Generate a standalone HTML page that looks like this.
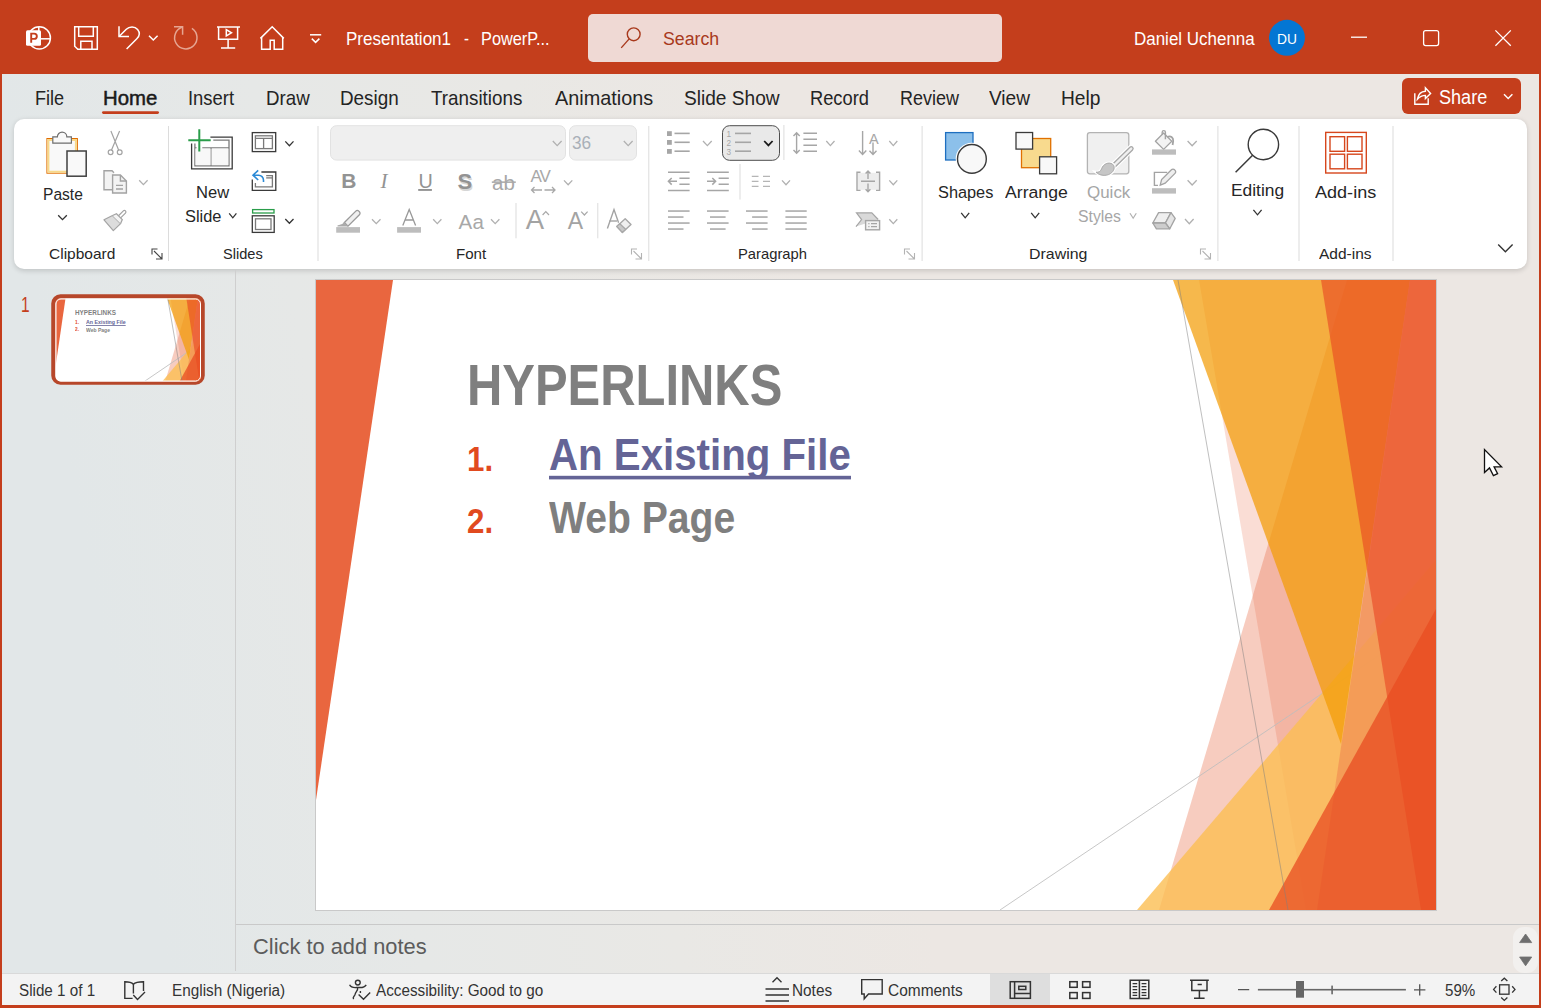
<!DOCTYPE html>
<html><head><meta charset="utf-8"><title>PowerPoint</title>
<style>
html,body{margin:0;padding:0}
body{width:1541px;height:1008px;overflow:hidden;position:relative;font-family:"Liberation Sans",sans-serif;background:#e6e7e7}
.a{position:absolute}
.t{position:absolute;white-space:pre;transform-origin:0 0}
</style></head><body>
<div class="a" style="left:0;top:0;width:1541px;height:1008px;background:#c43e1c"></div>
<div class="a" style="left:2px;top:74px;width:1537px;height:931px;background:linear-gradient(79deg,#e2e7e8 0%,#e2e7e8 10%,#e6e8e7 25%,#e9e8e5 40%,#ece7e3 55%,#ece7e3 100%)"></div>
<div class="a" style="left:588px;top:14px;width:414px;height:48px;border-radius:5px;background:#efd9d4"></div>
<div class="a" style="left:1402px;top:78px;width:119px;height:36px;border-radius:6px;background:#c43e1c"></div>
<div class="a" style="left:14px;top:119px;width:1513px;height:150px;border-radius:10px;background:#fff;box-shadow:0 1.5px 5px rgba(0,0,0,.15)"></div>
<div class="a" style="left:235px;top:270px;width:1px;height:701px;background:#cfcfcf"></div>
<div class="a" style="left:236px;top:924px;width:1303px;height:1px;background:#c9c9c9"></div>
<div class="a" style="left:2px;top:973px;width:1537px;height:32px;background:#f3f3f3;border-top:1px solid #d9d9d9;box-sizing:border-box"></div>
<svg class="a" style="left:0;top:0" width="1541" height="1008" viewBox="0 0 1541 1008"><rect x="315.5" y="279.5" width="1121" height="631" fill="#fff" stroke="#c9c9c9" stroke-width="1"/><defs><clipPath id="sc"><rect x="316" y="280" width="1120" height="630"/></clipPath></defs><g clip-path="url(#sc)"><polygon points="316,280 393,280 316,800" fill="#e9663f"/><polygon points="1199,280 1436,280 1436,910 1306,910" fill="#e8643e" fill-opacity="0.22"/><polygon points="1347,280 1436,280 1436,910 1159,910" fill="#e8643e" fill-opacity="0.33"/><line x1="1000" y1="910" x2="1436" y2="617" stroke="#bdbdbd" stroke-width="1" stroke-opacity="0.85"/><polygon points="1137,910 1436,560 1436,910" fill="#fbbe52" fill-opacity="0.8"/><polygon points="1173,280 1410,280 1341,744" fill="#f29b03" fill-opacity="0.71"/><polygon points="1410,280 1436,280 1436,910 1317,910" fill="#f29454" fill-opacity="0.8"/><polygon points="1321,280 1436,280 1436,910 1421,910" fill="#e84724" fill-opacity="0.62"/><polygon points="1436,609 1436,910 1269,910" fill="#e84c22" fill-opacity="0.75"/><line x1="1178" y1="280" x2="1288" y2="910" stroke="#808080" stroke-width="1" stroke-opacity="0.5"/></g><rect x="53.5" y="296.5" width="149" height="86" rx="7" fill="none" stroke="#b7472a" stroke-width="4.5"/><defs><clipPath id="tc"><rect x="55.5" y="298.5" width="145.5" height="83" rx="5"/></clipPath></defs><g clip-path="url(#tc)"><rect x="55" y="298" width="147" height="84" fill="#fff"/><g transform="translate(55.5,298.3) scale(0.1302,0.1318) translate(-316,-280)"><polygon points="316,280 393,280 316,800" fill="#e9663f"/><polygon points="1199,280 1436,280 1436,910 1306,910" fill="#e8643e" fill-opacity="0.22"/><polygon points="1347,280 1436,280 1436,910 1159,910" fill="#e8643e" fill-opacity="0.33"/><line x1="1000" y1="910" x2="1436" y2="617" stroke="#bdbdbd" stroke-width="1" stroke-opacity="0.85" vector-effect="non-scaling-stroke"/><polygon points="1137,910 1436,560 1436,910" fill="#fbbe52" fill-opacity="0.8"/><polygon points="1173,280 1410,280 1341,744" fill="#f29b03" fill-opacity="0.71"/><polygon points="1410,280 1436,280 1436,910 1317,910" fill="#f29454" fill-opacity="0.8"/><polygon points="1321,280 1436,280 1436,910 1421,910" fill="#e84724" fill-opacity="0.62"/><polygon points="1436,609 1436,910 1269,910" fill="#e84c22" fill-opacity="0.75"/><line x1="1178" y1="280" x2="1288" y2="910" stroke="#808080" stroke-width="1" stroke-opacity="0.5" vector-effect="non-scaling-stroke"/></g></g><rect x="86" y="325" width="39.7" height="0.8" fill="#646496"/><rect x="56" y="299" width="144.5" height="82" rx="5" fill="none" stroke="#fff" stroke-width="1"/><g fill="none" stroke="#ffffff" stroke-width="1.5"><circle cx="39.3" cy="37.9" r="11.1"/><line x1="38.8" y1="27" x2="38.8" y2="38.8"/><line x1="38.8" y1="38.8" x2="50" y2="38.8"/></g><rect x="26" y="30.3" width="15" height="15.4" rx="1.5" fill="#ffffff"/><path d="M31.2 42.8 V33.6 h3 a2.6 2.6 0 0 1 0 5.3 h-3" stroke="#c43e1c" stroke-width="1.9" fill="none"/><g fill="none" stroke="#ffffff" stroke-width="1.5" stroke-linejoin="miter"><path d="M74.7 26.7 H97.3 V49.3 H77.8 L74.7 46.2 Z"/><path d="M78.7 26.7 V36.3 H93.3 V26.7"/><path d="M80.8 49.3 V41.2 H92 V49.3"/><path d="M119 26.2 V36.5 H129"/><path d="M119.3 36.2 L126.3 29.2 C129.3 26.2 134.8 26 137.6 29.4 C140.2 32.6 139.6 36 136.8 38.8 L126.6 49"/><path d="M149 35.8 L153.3 40 L157.6 35.8"/></g><g fill="none" stroke="#e6a592" stroke-width="1.5"><path d="M191.9 28.3 A11.2 11.2 0 1 1 182.5 27"/><path d="M174 26.8 H182.6 V34.8"/></g><g fill="none" stroke="#ffffff" stroke-width="1.5"><path d="M217 27 H240"/><path d="M218.6 27 V39.2 H237.6 V27"/><path d="M226.3 29.6 L231.5 32.8 L226.3 36 Z"/><path d="M228.1 39.2 V48 M221 48 H235.2"/><path d="M260.4 38.4 L272.2 26.8 L283.8 38.4"/><path d="M261.6 37.3 V49.3 H270.2 V40.3 H274.2 V49.3 H282.7 V37.3"/><path d="M310 34.8 H321.2"/><path d="M311.8 38.6 L315.6 42.4 L319.4 38.6"/></g><g fill="none" stroke="#a8391c" stroke-width="1.4"><circle cx="633.7" cy="34.3" r="6.4"/><path d="M629.2 38.9 L621.2 47.9"/></g><circle cx="1287" cy="37.8" r="18" fill="#0476d3"/><g fill="none" stroke="#ffffff" stroke-width="1.3"><path d="M1351 37.2 H1367"/><rect x="1423.6" y="30.6" width="15" height="15" rx="2"/><path d="M1495.4 30.4 L1510.8 45.8 M1510.8 30.4 L1495.4 45.8"/></g><g fill="none" stroke="#ffffff" stroke-width="1.4" stroke-linejoin="miter"><path d="M1414.8 93.2 V104.3 H1428.2 V98.2"/><path d="M1417.4 99.2 C1418.2 94.5 1421.3 91.4 1425.4 91.2 V87.8 L1430.6 93.4 L1425.4 98.6 V95.4 C1422 95.4 1419.6 96.8 1417.4 99.2 Z"/><path d="M1504 94.2 L1508.2 98.6 L1512.4 94.2"/></g><rect x="102" y="111.2" width="57" height="2.8" rx="1.4" fill="#c43e1c"/><path d="M1498.2 244.6 L1505.4 251.8 L1512.6 244.6" fill="none" stroke="#333" stroke-width="1.4"/><rect x="168" y="126" width="1" height="135" fill="#dcdcdc"/><rect x="317.5" y="126" width="1" height="135" fill="#dcdcdc"/><rect x="648.3" y="126" width="1" height="135" fill="#dcdcdc"/><rect x="921.6" y="126" width="1" height="135" fill="#dcdcdc"/><rect x="1217.4" y="126" width="1" height="135" fill="#dcdcdc"/><rect x="1298.5" y="126" width="1" height="135" fill="#dcdcdc"/><rect x="1392.5" y="126" width="1" height="135" fill="#dcdcdc"/><rect x="46.9" y="138.5" width="30.5" height="34.7" fill="#f9f9f9" stroke="#e06c00" stroke-width="1"/><rect x="48.4" y="140" width="27.5" height="31.7" fill="none" stroke="#f8d98a" stroke-width="2"/><path d="M52.8 143.2 V136.8 H57.4 A4.7 4.7 0 0 1 66.8 136.8 H71.4 V143.2 Z" fill="#f9f9f9" stroke="#6e6e6e" stroke-width="1.2"/><rect x="67" y="151" width="19.2" height="25.2" fill="#f9f9f9" stroke="#404040" stroke-width="1.5"/><path d="M58.2 215.2 L62.5 219.6 L66.8 215.2" fill="none" stroke="#333333" stroke-width="1.3"/><g fill="none" stroke="#a3a3a3" stroke-width="1.2"><path d="M110.9 131 L118.7 150.2 M119.6 131 L111.4 150.2"/><circle cx="110.6" cy="152.3" r="2.4"/><circle cx="119.7" cy="152.3" r="2.4"/></g><g fill="#f3f3f3" stroke="#a3a3a3" stroke-width="1.4"><path d="M112.5 189.8 H104 V170.7 H112 L114 172.7"/><path d="M112.6 175 H120.4 L126.4 181 V193 H112.6 Z"/><path d="M120.4 175 V181 H126.4" fill="none"/><path d="M116 185.4 H123 M116 189 H123" fill="none"/></g><path d="M139.2 180.3 L143.39999999999998 184.6 L147.6 180.3" fill="none" stroke="#b0b0b0" stroke-width="1.3"/><path d="M118.8 217.6 L124.4 212" stroke="#a3a3a3" stroke-width="4.2" stroke-linecap="round"/><path d="M118.8 217.6 L124.4 212" stroke="#fff" stroke-width="1.8" stroke-linecap="round"/><path d="M104 219.8 L112.5 215.5 L120.6 223.6 L113.3 230.6 Z" fill="#dcdcdc" stroke="#a3a3a3" stroke-width="1.2" stroke-linejoin="round"/><path d="M112.5 215.5 L116.5 213.8 L122.3 219.6 L120.6 223.6" fill="#f3f3f3" stroke="#a3a3a3" stroke-width="1.2"/><g fill="none" stroke="#444" stroke-width="1.1"><path d="M152.0 254.5 V249.0 H157.5"/><path d="M154.0 251.0 L162.0 259.0 M162.0 253.0 V259.0 H156.0"/></g><g fill="none" stroke-width="1.3"><path d="M210.4 137.2 H232.2 V168.9 H191.6 V143.6" stroke="#3a3a3a"/><path d="M213.3 140.2 H229 V165.8 H194.9 V143.6" stroke="#7a7a7a"/><path d="M202.3 147.8 H229 M194.9 147.8 H196.6 M211 147.8 V165.8" stroke="#7a7a7a"/></g><rect x="195.5" y="148.5" width="15" height="16.6" fill="#f8f8f8"/><rect x="211.7" y="148.5" width="16.6" height="16.6" fill="#f8f8f8"/><path d="M188.3 140.3 H210.7 M199.3 129.3 V151.5" stroke="#2a9d4a" stroke-width="2"/><path d="M229.2 213.4 L232.8 217.8 L236.4 213.4" fill="none" stroke="#333333" stroke-width="1.3"/><g fill="none" stroke-width="1.3"><rect x="252.3" y="132.6" width="23.4" height="19" stroke="#3a3a3a"/><rect x="255.4" y="135.8" width="17" height="12.8" stroke="#7a7a7a"/><path d="M255.4 138.3 H272.4 M263.6 138.3 V148.6" stroke="#7a7a7a"/></g><path d="M285.3 141.4 L289.4 145.7 L293.5 141.4" fill="none" stroke="#333333" stroke-width="1.3"/><g fill="none" stroke-width="1.3"><path d="M261.4 172 H275.8 V190.3 H252.3 V179.4" stroke="#3a3a3a"/><path d="M266.2 175.6 H272.4 V186.9 H255.4 V183" stroke="#7a7a7a"/><path d="M266.2 177.9 H272.4" stroke="#7a7a7a"/><path d="M258.2 170.3 L253 175.2 L258.2 180 M253.2 175.2 H258.5 A5 5 0 0 1 263.5 180.2 V182" stroke="#2b8ad6" stroke-width="1.6"/></g><g fill="none" stroke-width="1.3"><rect x="252.6" y="209.6" width="21.4" height="3.4" stroke="#2a9d4a"/><rect x="252.3" y="215.8" width="21.9" height="16.6" stroke="#3a3a3a"/><rect x="255.5" y="218.8" width="15.5" height="10.7" stroke="#7a7a7a"/></g><path d="M285.3 219 L289.4 223.3 L293.5 219" fill="none" stroke="#333333" stroke-width="1.3"/><rect x="330.5" y="125.7" width="235" height="34.4" rx="6" fill="#efefef" stroke="#e2e2e2" stroke-width="1"/><rect x="569.5" y="125.7" width="67" height="34.4" rx="6" fill="#efefef" stroke="#e2e2e2" stroke-width="1"/><path d="M552.8 141 L557.2 145.6 L561.6 141" fill="none" stroke="#b0b0b0" stroke-width="1.3"/><path d="M623.8 141 L628.2 145.6 L632.6 141" fill="none" stroke="#b0b0b0" stroke-width="1.3"/><text x="341.2" y="187.8" font-family="Liberation Sans" font-size="21" font-weight="bold" font-style="normal" fill="#939393" >B</text><text x="380.5" y="187.8" font-family="Liberation Serif" font-size="21" font-weight="normal" font-style="italic" fill="#939393" >I</text><text x="418.4" y="187.6" font-family="Liberation Sans" font-size="19.8" font-weight="normal" font-style="normal" fill="#939393" >U</text><rect x="418.2" y="189" width="13.7" height="1.9" fill="#939393"/><text x="458.6" y="190.6" font-family="Liberation Sans" font-size="22" font-weight="bold" font-style="normal" fill="#d6d6d6" >S</text><text x="457.4" y="189.2" font-family="Liberation Sans" font-size="22" font-weight="bold" font-style="normal" fill="#939393" >S</text><text x="492" y="189.6" font-family="Liberation Sans" font-size="20.5" font-weight="normal" font-style="normal" fill="#a8a8a8" >ab</text><rect x="491.8" y="181.4" width="24" height="1.5" fill="#a8a8a8"/><text x="530.5" y="182.2" font-family="Liberation Sans" font-size="17" font-weight="normal" font-style="normal" fill="#a8a8a8" letter-spacing="-1">AV</text><g fill="none" stroke="#a8a8a8" stroke-width="1.3"><path d="M531.5 190 H542 M534.5 187 L531.5 190 L534.5 193 M544.5 190 H555 M552 187 L555 190 L552 193"/></g><path d="M564 180.4 L568.15 184.8 L572.3 180.4" fill="none" stroke="#b0b0b0" stroke-width="1.3"/><path d="M344.4 222.5 L355.8 211.1 A2.1 2.1 0 0 1 358.8 211.1 L359.4 211.7 A2.1 2.1 0 0 1 359.4 214.7 L348 226.1 Z" fill="#efefef" stroke="#999" stroke-width="1.3"/><path d="M344.4 222.6 L342.4 224.6 L337.6 226 L345.8 226 L348 226" fill="#ababab" stroke="#ababab" stroke-width="1.2"/><rect x="336.2" y="227.1" width="23.8" height="5.6" fill="#bdbdbd"/><path d="M372 219.3 L376.25 223.6 L380.5 219.3" fill="none" stroke="#b0b0b0" stroke-width="1.3"/><path d="M402.8 225.5 L409.2 209.6 L415.6 225.5 M405 220 H413.4" fill="none" stroke="#999" stroke-width="1.3"/><rect x="397.1" y="227.1" width="23.9" height="5.6" fill="#bdbdbd"/><path d="M433.2 219.3 L437.29999999999995 223.6 L441.4 219.3" fill="none" stroke="#b0b0b0" stroke-width="1.3"/><text x="458.4" y="228.6" font-family="Liberation Sans" font-size="20.5" font-weight="normal" font-style="normal" fill="#a8a8a8" >A</text><text x="472.6" y="228.6" font-family="Liberation Sans" font-size="20.5" font-weight="normal" font-style="normal" fill="#a8a8a8" >a</text><path d="M491 219.3 L495.2 223.6 L499.4 219.3" fill="none" stroke="#b0b0b0" stroke-width="1.3"/><rect x="515.5" y="203" width="1" height="35.30000000000001" fill="#dcdcdc"/><text x="525.8" y="228.6" font-family="Liberation Sans" font-size="27.5" font-weight="normal" font-style="normal" fill="#a3a3a3" >A</text><path d="M542.6 215 L545.8 211.6 L549 215" fill="none" stroke="#a8a8a8" stroke-width="1.2"/><text x="567.8" y="228.6" font-family="Liberation Sans" font-size="23" font-weight="normal" font-style="normal" fill="#a3a3a3" >A</text><path d="M581.2 211.6 L584.4 215 L587.6 211.6" fill="none" stroke="#a8a8a8" stroke-width="1.2"/><rect x="597.3" y="203" width="1" height="35.30000000000001" fill="#dcdcdc"/><path d="M607.4 228.6 L614 209.6 L620.6 228.6" fill="none" stroke="#a3a3a3" stroke-width="1.4"/><path d="M609.4 221 H617" fill="none" stroke="#a3a3a3" stroke-width="1.4"/><path d="M616.8 226.4 L625.2 218.8 L631 224.4 L622.4 232.4 Z" fill="#f0f0f0" stroke="#fff" stroke-width="3"/><path d="M616.8 226.4 L625.2 218.8 L631 224.4 L622.4 232.4 Z" fill="#f0f0f0" stroke="#a8a8a8" stroke-width="1.4" stroke-linejoin="round"/><path d="M616.8 226.4 L619.8 223.7 L625.6 229.3 L622.4 232.4 Z" fill="#c8c8c8" stroke="#a8a8a8" stroke-width="1.2" stroke-linejoin="round"/><g fill="none" stroke="#b3b3b3" stroke-width="1.1"><path d="M631.5 254.5 V249.0 H637"/><path d="M633.5 251.0 L641.5 259.0 M641.5 253.0 V259.0 H635.5"/></g><g fill="#a6a6a6"><rect x="667" y="131.2" width="4.8" height="4.8"/><rect x="667" y="140" width="4.8" height="4.8"/><rect x="667" y="149" width="4.8" height="4.8"/><rect x="674.5" y="132.6" width="15.2" height="1.6"/><rect x="674.5" y="141.5" width="15.2" height="1.6"/><rect x="674.5" y="150.4" width="15.2" height="1.6"/></g><path d="M703 141 L707.35 145.6 L711.7 141" fill="none" stroke="#b0b0b0" stroke-width="1.3"/><rect x="722.5" y="125.7" width="57" height="34.6" rx="7" fill="#e9e9e9" stroke="#4d4d4d" stroke-width="1"/><text x="726.6" y="137" font-family="Liberation Sans" font-size="8.2" font-weight="normal" font-style="normal" fill="#a6a6a6" >1</text><text x="726.6" y="146" font-family="Liberation Sans" font-size="8.2" font-weight="normal" font-style="normal" fill="#a6a6a6" >2</text><text x="726.6" y="155" font-family="Liberation Sans" font-size="8.2" font-weight="normal" font-style="normal" fill="#a6a6a6" >3</text><g fill="#a6a6a6"><rect x="735" y="132.6" width="16" height="1.6"/><rect x="735" y="141.5" width="16" height="1.6"/><rect x="735" y="150.4" width="16" height="1.6"/></g><path d="M764.2 141 L768.4000000000001 145.4 L772.6 141" fill="none" stroke="#1a1a1a" stroke-width="1.8"/><rect x="783.4" y="125" width="1" height="35" fill="#dcdcdc"/><g fill="none" stroke="#a6a6a6" stroke-width="1.4"><path d="M796.6 133 V153 M793.5 136 L796.6 132.8 L799.7 136 M793.5 150 L796.6 153.2 L799.7 150"/><path d="M803.4 133.2 H817 M803.4 139.2 H817 M803.4 145.2 H817 M803.4 151.2 H817"/></g><path d="M826.3 141 L830.4 145.6 L834.5 141" fill="none" stroke="#b0b0b0" stroke-width="1.3"/><text x="869" y="143.5" font-family="Liberation Sans" font-size="14.5" font-weight="normal" font-style="normal" fill="#a6a6a6" >A</text><g fill="none" stroke="#a6a6a6" stroke-width="1.4"><path d="M862.6 131 V154.6 M858.9 150.6 L862.6 154.4 L866.3 150.6 M873 142.5 V154.6 M869.5 150.8 L873 154.4 L876.5 150.8"/></g><path d="M889.3 141 L893.3 145.6 L897.3 141" fill="none" stroke="#b0b0b0" stroke-width="1.3"/><g fill="none" stroke="#a6a6a6" stroke-width="1.5"><path d="M668 172.3 H689.6 M668 190.4 H689.6 M679.4 178.3 H689.6 M679.4 184.3 H689.6 M668.5 181.3 H677 M671.7 178 L668.4 181.3 L671.7 184.6"/><path d="M707 172.3 H728.8 M707 190.4 H728.8 M718.6 178.3 H728.8 M718.6 184.3 H728.8 M707 181.3 H715.5 M712.3 178 L715.6 181.3 L712.3 184.6"/></g><rect x="739.5" y="164" width="1" height="35.599999999999994" fill="#dcdcdc"/><g fill="none" stroke="#b5b5b5" stroke-width="1.3"><path d="M751.8 176.3 H758.5 M751.8 181.3 H758.5 M751.8 186.3 H758.5 M763 176.3 H770 M763 181.3 H770 M763 186.3 H770"/></g><path d="M782 180.4 L786.0 184.8 L790 180.4" fill="none" stroke="#b0b0b0" stroke-width="1.3"/><rect x="857.6" y="172.8" width="21.4" height="17" fill="#ededed"/><g fill="none" stroke="#a6a6a6" stroke-width="1.4"><path d="M860.5 172.2 H857 V190.4 H860.5 M876 172.2 H879.6 V190.4 H876"/><path d="M861 181.3 H875 M868 171 V179 M865.6 173.5 L868 171 L870.4 173.5 M868 183.6 V191.8 M865.6 189.3 L868 191.8 L870.4 189.3"/></g><path d="M889.3 180.4 L893.3 184.8 L897.3 180.4" fill="none" stroke="#b0b0b0" stroke-width="1.3"/><rect x="668" y="210.3" width="21.6" height="1.5" fill="#a6a6a6"/><rect x="668" y="216.3" width="15.5" height="1.5" fill="#a6a6a6"/><rect x="668" y="222.3" width="21.6" height="1.5" fill="#a6a6a6"/><rect x="668" y="228.3" width="15.5" height="1.5" fill="#a6a6a6"/><rect x="707" y="210.3" width="21.6" height="1.5" fill="#a6a6a6"/><rect x="710" y="216.3" width="15.600000000000001" height="1.5" fill="#a6a6a6"/><rect x="707" y="222.3" width="21.6" height="1.5" fill="#a6a6a6"/><rect x="710" y="228.3" width="15.600000000000001" height="1.5" fill="#a6a6a6"/><rect x="746" y="210.3" width="21.6" height="1.5" fill="#a6a6a6"/><rect x="752.1" y="216.3" width="15.500000000000002" height="1.5" fill="#a6a6a6"/><rect x="746" y="222.3" width="21.6" height="1.5" fill="#a6a6a6"/><rect x="752.1" y="228.3" width="15.500000000000002" height="1.5" fill="#a6a6a6"/><rect x="785.4" y="210.3" width="21.3" height="1.5" fill="#a6a6a6"/><rect x="785.4" y="216.3" width="21.3" height="1.5" fill="#a6a6a6"/><rect x="785.4" y="222.3" width="21.3" height="1.5" fill="#a6a6a6"/><rect x="785.4" y="228.3" width="21.3" height="1.5" fill="#a6a6a6"/><path d="M856 226.6 L861.6 219.6 L856.5 212.8 H871.8 L878.2 219.5" fill="#d9d9d9" stroke="#a6a6a6" stroke-width="1.2"/><rect x="865.6" y="220.6" width="14" height="9.2" fill="#f3f3f3" stroke="#a6a6a6" stroke-width="1.4"/><path d="M868.3 223.6 H869.5 M871 223.6 H877 M868.3 226.6 H869.5 M871 226.6 H877" stroke="#a6a6a6" stroke-width="1.1"/><path d="M889.3 219.3 L893.3 223.6 L897.3 219.3" fill="none" stroke="#b0b0b0" stroke-width="1.3"/><g fill="none" stroke="#b3b3b3" stroke-width="1.1"><path d="M904.5 254.5 V249.0 H910"/><path d="M906.5 251.0 L914.5 259.0 M914.5 253.0 V259.0 H908.5"/></g><rect x="945.6" y="132.6" width="27.4" height="27.4" fill="#8cc0ea" stroke="#1e6fc0" stroke-width="1.3"/><circle cx="971.9" cy="158.9" r="16.2" fill="#fff"/><circle cx="971.9" cy="158.9" r="14.4" fill="#f8f8f8" stroke="#3a3a3a" stroke-width="1.4"/><path d="M961.2 212.8 L965.2 217.8 L969.2 212.8" fill="none" stroke="#333333" stroke-width="1.3"/><rect x="1021.5" y="138.5" width="29.2" height="29.2" fill="#f8da8e" stroke="#e07000" stroke-width="1.3"/><rect x="1016" y="132.5" width="16.6" height="16.6" fill="#f8f8f8" stroke="#3a3a3a" stroke-width="1.3"/><rect x="1039.6" y="156.8" width="17" height="17" fill="#f8f8f8" stroke="#3a3a3a" stroke-width="1.3"/><path d="M1031.2 212.8 L1035.2 217.8 L1039.2 212.8" fill="none" stroke="#333333" stroke-width="1.3"/><rect x="1087.4" y="132.6" width="41.4" height="41.2" rx="2.5" fill="#f0f0f0" stroke="#b3b3b3" stroke-width="1.3"/><path d="M1131.2 148.6 L1111 168.4" stroke="#fff" stroke-width="7.5" stroke-linecap="round"/><path d="M1131.2 148.6 L1111 168.4" stroke="#a8a8a8" stroke-width="5" stroke-linecap="round"/><path d="M1131.2 148.6 L1111 168.4" stroke="#f0f0f0" stroke-width="2.4" stroke-linecap="round"/><path d="M1112.6 164.2 C1108.5 161.5 1103.2 164 1101.6 168.8 C1100.6 171.4 1098.8 172.6 1096 172.2 C1099.6 175.8 1106.2 176.4 1110.4 173.6 C1114 171.4 1115.6 166.8 1112.6 164.2 Z" fill="#c6c6c6" stroke="#fff" stroke-width="3"/><path d="M1112.6 164.2 C1108.5 161.5 1103.2 164 1101.6 168.8 C1100.6 171.4 1098.8 172.6 1096 172.2 C1099.6 175.8 1106.2 176.4 1110.4 173.6 C1114 171.4 1115.6 166.8 1112.6 164.2 Z" fill="#c6c6c6" stroke="#a8a8a8" stroke-width="1"/><path d="M1130 213.2 L1133.15 218.2 L1136.3 213.2" fill="none" stroke="#b0b0b0" stroke-width="1.2"/><path d="M1155.4 141.2 L1163.6 133 L1171.8 141.2 L1163.6 149.4 Z" fill="#f3f3f3" stroke="#a3a3a3" stroke-width="1.3" stroke-linejoin="round"/><path d="M1162.2 134.4 V132.2 A1.6 1.6 0 0 1 1165.4 132.2 V139.2" fill="none" stroke="#a3a3a3" stroke-width="1.4"/><path d="M1167.4 137 C1170.6 135.2 1173.4 137.6 1173.2 141 L1172.6 145" fill="none" stroke="#a3a3a3" stroke-width="1.8"/><rect x="1152" y="149.4" width="24" height="5.3" fill="#bdbdbd"/><path d="M1187.6 141 L1192.15 145.8 L1196.7 141" fill="none" stroke="#b0b0b0" stroke-width="1.3"/><path d="M1167.2 172.4 H1154.4 V185.4 H1158" fill="none" stroke="#a3a3a3" stroke-width="1.4"/><path d="M1160.2 185.2 L1161.6 179.6 L1171.4 169.8 A2.2 2.2 0 0 1 1174.6 169.8 L1175 170.2 A2.2 2.2 0 0 1 1175 173.4 L1165.2 183.2 Z" fill="#eeeeee" stroke="#a3a3a3" stroke-width="1.3"/><rect x="1152" y="188.2" width="24" height="5.4" fill="#bdbdbd"/><path d="M1187.6 180.2 L1192.15 185 L1196.7 180.2" fill="none" stroke="#b0b0b0" stroke-width="1.3"/><path d="M1152.8 223 L1158.6 212.6 H1171 L1165.4 223 Z" fill="#efefef" stroke="#a3a3a3" stroke-width="1.3" stroke-linejoin="round"/><path d="M1171 212.6 L1175.2 218.4 L1169.8 228.8 L1165.4 223 Z" fill="#e4e4e4" stroke="#a3a3a3" stroke-width="1.3" stroke-linejoin="round"/><path d="M1152.8 223 H1165.4 L1169.8 228.8 H1156.4 Z" fill="#cdcdcd" stroke="#a3a3a3" stroke-width="1.3" stroke-linejoin="round"/><path d="M1185 219 L1189.3 223.8 L1193.6 219" fill="none" stroke="#b0b0b0" stroke-width="1.3"/><g fill="none" stroke="#b3b3b3" stroke-width="1.1"><path d="M1200.5 254.5 V249.0 H1206"/><path d="M1202.5 251.0 L1210.5 259.0 M1210.5 253.0 V259.0 H1204.5"/></g><circle cx="1263.4" cy="144.5" r="15.2" fill="none" stroke="#3a3a3a" stroke-width="1.4"/><path d="M1252.6 155.3 L1235.6 172.2" stroke="#3a3a3a" stroke-width="1.5"/><path d="M1253.4 209.8 L1257.5 214.8 L1261.6 209.8" fill="none" stroke="#333333" stroke-width="1.3"/><g fill="none" stroke="#d6471d" stroke-width="1.4"><rect x="1325.7" y="132.4" width="40.6" height="40.6"/><rect x="1330" y="136.7" width="14.6" height="14.6"/><rect x="1347.4" y="136.7" width="14.6" height="14.6"/><rect x="1330" y="154.2" width="14.6" height="14.6"/><rect x="1347.4" y="154.2" width="14.6" height="14.6"/></g><rect x="549" y="475.8" width="302" height="3.6" fill="#646496"/><rect x="1513" y="927" width="25" height="46" rx="11" fill="#f2f0ee"/><path d="M1519.6 942.6 L1525.6 934 L1531.7 942.6 Z" fill="#6e6e6e" stroke="#6e6e6e" stroke-width="0.8" stroke-linejoin="round"/><path d="M1519.6 957 L1525.6 965.8 L1531.7 957 Z" fill="#6e6e6e" stroke="#6e6e6e" stroke-width="0.8" stroke-linejoin="round"/><g fill="none" stroke="#333333" stroke-width="1.4"><path d="M132.6 998.4 H124.8 V981.8 C128 981.8 131.5 982.2 133.4 984.2 C135.4 982.2 140 981.8 143.5 981.8 V991"/><path d="M133.4 984.2 V993.5"/><path d="M133.3 995 L137.5 999.4 L145 992"/><circle cx="357.8" cy="982.6" r="2.4"/><path d="M349.6 984.8 C351.5 988.6 355 987.5 357.8 987.5 C360.6 987.5 364.2 988.4 366.2 984.8"/><path d="M357.6 987.6 C358.2 991 355.5 991.5 355.2 994 C354.9 996.5 352 996.8 353.6 999.2"/><path d="M360.4 991 V993"/><path d="M358.6 994.4 L363.5 999.2 L370.2 992.4"/><path d="M772.5 982.2 L777 977.8 L781.5 982.2 M765.5 989 H789 M765.5 995 H789 M765.5 1001 H789"/><path d="M861.7 979.6 H882.2 V994 H868.5 L864.2 998.8 V994 H861.7 Z" stroke-linejoin="miter"/></g><rect x="990" y="974" width="60" height="31" fill="#dedede"/><g fill="none" stroke="#333333" stroke-width="1.5"><rect x="1010.2" y="981.7" width="20.2" height="16.6"/><path d="M1014.6 981.7 V998.3 M1014.6 993.6 H1030.4"/><rect x="1018.8" y="986.3" width="7" height="3.2"/><rect x="1069.8" y="981.7" width="7.4" height="5.6"/><rect x="1082.6" y="981.7" width="7.4" height="5.6"/><rect x="1069.8" y="992.6" width="7.4" height="5.8"/><rect x="1082.6" y="992.6" width="7.4" height="5.8"/><path d="M1130.2 980.2 H1139.4 V998.4 H1130.2 Z M1139.4 980.2 H1148.8 V998.4 H1139.4"/></g><g stroke="#333333" stroke-width="1.1"><path d="M1132.6 983.6 H1137.2 M1132.6 986.6 H1137.2 M1132.6 989.6 H1137.2 M1132.6 992.6 H1137.2 M1132.6 995.4 H1137.2"/><path d="M1141.6 983.6 H1146.4 M1141.6 986.6 H1146.4 M1141.6 989.6 H1146.4 M1141.6 992.6 H1146.4 M1141.6 995.4 H1146.4"/></g><g fill="none" stroke="#333333" stroke-width="1.5"><path d="M1190 980.2 H1208.8 M1191.8 980.2 V990.6 H1207 V980.2 M1197.6 984.6 H1201.8 M1199.4 990.6 V998 M1194 998.2 H1204.6"/></g><g fill="none" stroke="#555" stroke-width="1.3"><path d="M1238 989.6 H1249.2 M1414 989.9 H1425.4 M1419.7 984.2 V995.6"/></g><rect x="1257.9" y="988.9" width="148" height="1.6" fill="#666"/><rect x="1331.3" y="985.6" width="1.6" height="8.7" fill="#666"/><rect x="1296" y="981" width="8" height="16.7" fill="#666"/><g fill="none" stroke="#333333" stroke-width="1.3"><rect x="1499.6" y="984.8" width="9.4" height="9.4"/><path d="M1496.4 986.2 L1493.6 989.4 L1496.4 992.6 M1512.2 986.2 L1515 989.4 L1512.2 992.6 M1501.2 981 L1504.3 978.2 L1507.4 981 M1501.2 997.6 L1504.3 1000.4 L1507.4 997.6"/></g><path d="M1484.5 449.5 V472.5 L1489.5 467.9 L1493.4 475.6 L1497.6 473.6 L1494.1 466.9 H1501.6 Z" fill="#fff" stroke="#111" stroke-width="1.3" stroke-linejoin="miter"/></svg>
<div class="t" style="left:345.60px;top:29.79px;font-size:18.60px;line-height:18.60px;color:#ffffff;transform:scaleX(0.9156);">Presentation1</div>
<div class="t" style="left:464.00px;top:29.79px;font-size:18.60px;line-height:18.60px;color:#ffffff;transform:scaleX(0.8022);">-</div>
<div class="t" style="left:481.00px;top:29.79px;font-size:18.60px;line-height:18.60px;color:#ffffff;transform:scaleX(0.8769);">PowerP...</div>
<div class="t" style="left:662.80px;top:29.19px;font-size:19.19px;line-height:19.19px;color:#a8391c;transform:scaleX(0.9240);">Search</div>
<div class="t" style="left:1133.60px;top:29.54px;font-size:18.90px;line-height:18.90px;color:#ffffff;transform:scaleX(0.8979);">Daniel Uchenna</div>
<div class="t" style="left:1277.40px;top:30.58px;font-size:15.55px;line-height:15.55px;color:#ffffff;transform:scaleX(0.8855);">DU</div>
<div class="t" style="left:34.50px;top:88.05px;font-size:20.06px;line-height:20.06px;color:#242424;transform:scaleX(0.9011);">File</div>
<div class="t" style="left:102.60px;top:88.05px;font-size:20.06px;line-height:20.06px;color:#1a1a1a;transform:scaleX(1.0158);-webkit-text-stroke:0.5px #1a1a1a;">Home</div>
<div class="t" style="left:187.80px;top:88.05px;font-size:20.06px;line-height:20.06px;color:#242424;transform:scaleX(0.9193);">Insert</div>
<div class="t" style="left:266.00px;top:88.05px;font-size:20.06px;line-height:20.06px;color:#242424;transform:scaleX(0.9330);">Draw</div>
<div class="t" style="left:339.60px;top:88.05px;font-size:20.06px;line-height:20.06px;color:#242424;transform:scaleX(0.9411);">Design</div>
<div class="t" style="left:430.50px;top:88.05px;font-size:20.06px;line-height:20.06px;color:#242424;transform:scaleX(0.9386);">Transitions</div>
<div class="t" style="left:554.60px;top:88.05px;font-size:20.06px;line-height:20.06px;color:#242424;transform:scaleX(0.9900);">Animations</div>
<div class="t" style="left:684.30px;top:88.05px;font-size:20.06px;line-height:20.06px;color:#242424;transform:scaleX(0.9533);">Slide Show</div>
<div class="t" style="left:810.00px;top:88.05px;font-size:20.06px;line-height:20.06px;color:#242424;transform:scaleX(0.9121);">Record</div>
<div class="t" style="left:900.00px;top:88.05px;font-size:20.06px;line-height:20.06px;color:#242424;transform:scaleX(0.8968);">Review</div>
<div class="t" style="left:989.00px;top:88.05px;font-size:20.06px;line-height:20.06px;color:#242424;transform:scaleX(0.9507);">View</div>
<div class="t" style="left:1060.60px;top:88.05px;font-size:20.06px;line-height:20.06px;color:#242424;transform:scaleX(0.9559);">Help</div>
<div class="t" style="left:1438.70px;top:86.70px;font-size:20.35px;line-height:20.35px;color:#ffffff;transform:scaleX(0.8890);">Share</div>
<div class="t" style="left:43.00px;top:187.17px;font-size:16.86px;line-height:16.86px;color:#262626;transform:scaleX(0.9239);">Paste</div>
<div class="t" style="left:195.50px;top:185.47px;font-size:16.86px;line-height:16.86px;color:#262626;transform:scaleX(0.9821);">New</div>
<div class="t" style="left:185.00px;top:209.47px;font-size:16.86px;line-height:16.86px;color:#262626;transform:scaleX(0.9730);">Slide</div>
<div class="t" style="left:937.70px;top:185.37px;font-size:16.86px;line-height:16.86px;color:#262626;transform:scaleX(0.9675);">Shapes</div>
<div class="t" style="left:1004.50px;top:185.37px;font-size:16.86px;line-height:16.86px;color:#262626;transform:scaleX(1.0463);">Arrange</div>
<div class="t" style="left:1086.60px;top:185.37px;font-size:16.86px;line-height:16.86px;color:#a6a6a6;transform:scaleX(1.0055);">Quick</div>
<div class="t" style="left:1078.00px;top:209.47px;font-size:16.86px;line-height:16.86px;color:#a6a6a6;transform:scaleX(0.9359);">Styles</div>
<div class="t" style="left:1230.80px;top:182.67px;font-size:16.86px;line-height:16.86px;color:#262626;transform:scaleX(1.0311);">Editing</div>
<div class="t" style="left:1314.80px;top:185.37px;font-size:16.86px;line-height:16.86px;color:#262626;transform:scaleX(1.0707);">Add-ins</div>
<div class="t" style="left:48.60px;top:245.70px;font-size:15.41px;line-height:15.41px;color:#262626;transform:scaleX(1.0069);">Clipboard</div>
<div class="t" style="left:222.70px;top:245.70px;font-size:15.41px;line-height:15.41px;color:#262626;transform:scaleX(0.9480);">Slides</div>
<div class="t" style="left:456.00px;top:245.70px;font-size:15.41px;line-height:15.41px;color:#262626;transform:scaleX(0.9801);">Font</div>
<div class="t" style="left:738.00px;top:245.70px;font-size:15.41px;line-height:15.41px;color:#262626;transform:scaleX(0.9590);">Paragraph</div>
<div class="t" style="left:1028.60px;top:245.70px;font-size:15.41px;line-height:15.41px;color:#262626;transform:scaleX(1.0328);">Drawing</div>
<div class="t" style="left:1318.50px;top:245.70px;font-size:15.41px;line-height:15.41px;color:#262626;transform:scaleX(1.0052);">Add-ins</div>
<div class="t" style="left:572.30px;top:134.23px;font-size:18.31px;line-height:18.31px;color:#a9b0b8;transform:scaleX(0.9396);">36</div>
<div class="t" style="left:466.70px;top:356.08px;font-size:58.14px;line-height:58.14px;color:#7f7f7f;font-weight:bold;transform:scaleX(0.8415);">HYPERLINKS</div>
<div class="t" style="left:467.40px;top:441.65px;font-size:34.88px;line-height:34.88px;color:#e14a1f;font-weight:bold;transform:scaleX(0.8960);">1.</div>
<div class="t" style="left:549.20px;top:434.24px;font-size:43.60px;line-height:43.60px;color:#646496;font-weight:bold;transform:scaleX(0.9228);">An Existing File</div>
<div class="t" style="left:467.40px;top:503.95px;font-size:34.88px;line-height:34.88px;color:#e14a1f;font-weight:bold;transform:scaleX(0.8960);">2.</div>
<div class="t" style="left:549.20px;top:496.54px;font-size:43.60px;line-height:43.60px;color:#7f7f7f;font-weight:bold;transform:scaleX(0.8971);">Web Page</div>
<div class="t" style="left:75.00px;top:308.82px;font-size:7.27px;line-height:7.27px;color:#7f7f7f;font-weight:bold;transform:scaleX(0.8753);">HYPERLINKS</div>
<div class="t" style="left:75.00px;top:319.75px;font-size:5.23px;line-height:5.23px;color:#e14a1f;font-weight:bold;transform:scaleX(0.9155);">1.</div>
<div class="t" style="left:86.00px;top:319.01px;font-size:6.10px;line-height:6.10px;color:#646496;font-weight:bold;transform:scaleX(0.8671);">An Existing File</div>
<div class="t" style="left:75.00px;top:327.25px;font-size:5.23px;line-height:5.23px;color:#e14a1f;font-weight:bold;transform:scaleX(0.9155);">2.</div>
<div class="t" style="left:86.00px;top:326.51px;font-size:6.10px;line-height:6.10px;color:#7f7f7f;font-weight:bold;transform:scaleX(0.8259);">Web Page</div>
<div class="t" style="left:21.40px;top:292.73px;font-size:22.67px;line-height:22.67px;color:#c43e1c;transform:scaleX(0.6834);">1</div>
<div class="t" style="left:252.80px;top:935.28px;font-size:22.97px;line-height:22.97px;color:#5c5c5c;transform:scaleX(0.9509);">Click to add notes</div>
<div class="t" style="left:18.50px;top:982.04px;font-size:16.42px;line-height:16.42px;color:#333333;transform:scaleX(0.9270);">Slide 1 of 1</div>
<div class="t" style="left:171.80px;top:982.04px;font-size:16.42px;line-height:16.42px;color:#333333;transform:scaleX(0.9335);">English (Nigeria)</div>
<div class="t" style="left:375.80px;top:982.04px;font-size:16.42px;line-height:16.42px;color:#333333;transform:scaleX(0.9308);">Accessibility: Good to go</div>
<div class="t" style="left:792.20px;top:982.04px;font-size:16.42px;line-height:16.42px;color:#333333;transform:scaleX(0.9354);">Notes</div>
<div class="t" style="left:887.60px;top:982.04px;font-size:16.42px;line-height:16.42px;color:#333333;transform:scaleX(0.9419);">Comments</div>
<div class="t" style="left:1444.70px;top:982.04px;font-size:16.42px;line-height:16.42px;color:#333333;transform:scaleX(0.9224);">59%</div>
</body></html>
